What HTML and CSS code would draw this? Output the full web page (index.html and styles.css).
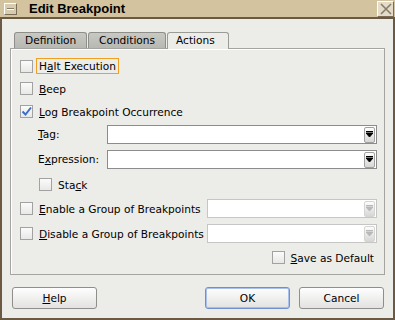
FILE: index.html
```html
<!DOCTYPE html>
<html lang="en">
<head>
  <meta charset="UTF-8">
  <title>Edit Breakpoint</title>
  <link rel="stylesheet" href="styles.css">
</head>
<body>

  <div class="window">
    <div class="titlebar">
      <span class="title-btn menu-btn"><span class="dash"></span></span>
      <span class="title">Edit Breakpoint</span>
      <span class="title-btn close-btn">
        <svg width="14" height="14" viewBox="0 0 14 14">
          <path d="M2 2 L12 12 M12 2 L2 12" stroke="#8a7d66" stroke-width="1.6" fill="none"/>
        </svg>
      </span>
    </div>

    <div class="content">
      <div class="tabs">
        <div class="tab">Definition</div>
        <div class="tab">Conditions</div>
        <div class="tab selected">Actions</div>
      </div>

      <div class="panel">
        <div class="row first">
          <span class="check"></span>
          <span class="label focused">H<u>a</u>lt Execution</span>
        </div>
        <div class="row">
          <span class="check"></span>
          <span class="label"><u>B</u>eep</span>
        </div>
        <div class="row">
          <span class="check checked">
            <svg width="11" height="11" viewBox="0 0 11 11">
              <path d="M1.5 5.5 L4.5 8.5 L10 1.5" stroke="#3b6fc9" stroke-width="2" fill="none"/>
            </svg>
          </span>
          <span class="label"><u>L</u>og Breakpoint Occurrence</span>
        </div>

        <div class="field-row tag-row">
          <span class="field-label"><u>T</u>ag:</span>
          <div class="combo">
            <span class="combo-arrow"><svg width="7" height="7" viewBox="0 0 7 7"><path d="M0 0.5 H7 M0 2 H7 L3.5 6 Z" stroke="#000" stroke-width="1" fill="#000"/></svg></span>
          </div>
        </div>
        <div class="field-row expr-row">
          <span class="field-label">E<u>x</u>pression:</span>
          <div class="combo">
            <span class="combo-arrow"><svg width="7" height="7" viewBox="0 0 7 7"><path d="M0 0.5 H7 M0 2 H7 L3.5 6 Z" stroke="#000" stroke-width="1" fill="#000"/></svg></span>
          </div>
        </div>
        <div class="row indent">
          <span class="check"></span>
          <span class="label">Sta<u>c</u>k</span>
        </div>

        <div class="group-row">
          <span class="check"></span>
          <span class="label group-label"><u>E</u>nable a Group of Breakpoints</span>
          <div class="combo disabled">
            <span class="combo-arrow"><svg width="7" height="7" viewBox="0 0 7 7"><path d="M0 0.5 H7 M0 2 H7 L3.5 6 Z" stroke="#b8b8b8" stroke-width="1" fill="#b8b8b8"/></svg></span>
          </div>
        </div>
        <div class="group-row">
          <span class="check"></span>
          <span class="label group-label"><u>D</u>isable a Group of Breakpoints</span>
          <div class="combo disabled">
            <span class="combo-arrow"><svg width="7" height="7" viewBox="0 0 7 7"><path d="M0 0.5 H7 M0 2 H7 L3.5 6 Z" stroke="#b8b8b8" stroke-width="1" fill="#b8b8b8"/></svg></span>
          </div>
        </div>

        <div class="row save-row">
          <span class="check"></span>
          <span class="label"><u>S</u>ave as Default</span>
        </div>
      </div>

      <div class="buttons">
        <button type="button" class="btn"><u>H</u>elp</button>
        <span class="spacer"></span>
        <button type="button" class="btn default">OK</button>
        <button type="button" class="btn">Cancel</button>
      </div>
    </div>
  </div>

</body>
</html>
```

FILE: styles.css
```css
* {
  box-sizing: border-box;
}

body {
  margin: 0;
  font-family: "DejaVu Sans", sans-serif;
  font-size: 10.6px;
  color: #000;
  background: #ecece8;
}

.window {
  width: 395px;
  height: 320px;
  border: 2px solid #6b5944;
  border-top: none;
  background: #ecece8;
  display: flex;
  flex-direction: column;
}

.titlebar {
  height: 19px;
  background: #d3c39f;
  border-bottom: 2px solid #6b5944;
  display: flex;
  align-items: center;
  margin: 0 -2px;
  padding: 0 1px 0 4px;
}

.title {
  flex: 1;
  font-family: "Liberation Sans", Arial, sans-serif;
  font-weight: bold;
  font-size: 13px;
  margin-left: 12px;
}

.title-btn {
  width: 13px;
  height: 12px;
  background: #d8ccb0;
  border: 1px solid;
  border-color: #fff #7a6c55 #7a6c55 #fff;
  display: flex;
  align-items: center;
  justify-content: center;
}

.menu-btn .dash {
  width: 7px;
  height: 2px;
  background: #8a7d66;
  border-bottom: 1px solid #fff;
}

.close-btn {
  width: 17px;
  height: 16px;
  background: #e4dccb;
}

.content {
  flex: 1;
  padding: 13px 8px 0 8px;
  display: flex;
  flex-direction: column;
}

.tabs {
  display: flex;
  padding-left: 4px;
  height: 16px;
  align-items: flex-end;
}

.tab {
  height: 16px;
  padding: 0 0 0 10px;
  background: linear-gradient(#c9c9c3, #b8b8b2);
  border: 1px solid #8e8e8a;
  border-bottom: none;
  border-radius: 3px 3px 0 0;
  margin-right: 1px;
  line-height: 15px;
}

.tab:nth-child(1) { width: 73px; }
.tab:nth-child(2) { width: 78px; }

.tab.selected {
  width: 62px;
  height: 17px;
  background: #ecece8;
  border-color: #9a9a96;
  position: relative;
  top: 1px;
  padding-left: 8px;
}

.panel {
  border: 1px solid #a4a4a0;
  box-shadow: inset 1px 1px #fff;
  padding: 6px 7px 5px 9px;
}

.row {
  height: 23px;
  display: flex;
  align-items: center;
}

.row.first {
  height: 22px;
}

.row.indent {
  padding-left: 19px;
}

.check {
  width: 13px;
  height: 13px;
  border: 1px solid #a2a2a2;
  background: linear-gradient(#fbfbfb, #e8e8e6);
  display: flex;
  align-items: center;
  justify-content: center;
  flex: none;
}

.label {
  margin-left: 3px;
  padding: 1px 2px;
  border: 1px solid transparent;
  white-space: nowrap;
}

.label.focused {
  border-color: #f0a020;
}

.field-row {
  display: flex;
  padding-left: 18px;
}

.tag-row {
  height: 23px;
  align-items: flex-start;
  padding-top: 2px;
}

.expr-row {
  height: 27px;
  align-items: flex-start;
  padding-top: 4px;
}

.field-label {
  width: 69px;
  height: 19px;
  line-height: 19px;
  white-space: nowrap;
}

.combo {
  flex: 1;
  height: 19px;
  border: 1px solid #8c8c8c;
  background: #fff;
  display: flex;
  justify-content: flex-end;
  align-items: center;
  padding-right: 1px;
}

.combo-arrow {
  width: 11px;
  height: 16px;
  border: 1px solid #a0a0a0;
  border-radius: 2px;
  background: linear-gradient(#fdfdfd, #d6d6d4);
  display: flex;
  align-items: center;
  justify-content: center;
}

.combo.disabled {
  border-color: #c6c6c4;
}

.combo.disabled .combo-arrow {
  border-color: #d4d4d2;
}

.group-row {
  height: 25px;
  display: flex;
  align-items: center;
}

.group-label {
  width: 171px;
  flex: none;
}

.save-row {
  justify-content: flex-end;
}

.buttons {
  display: flex;
  padding: 12px 1px 0 2px;
}

.spacer {
  flex: 1;
}

.btn {
  width: 85px;
  height: 22px;
  font-family: "DejaVu Sans", sans-serif;
  font-size: 10.6px;
  color: #000;
  border: 1px solid #8e8e8c;
  border-radius: 3px;
  background: linear-gradient(#fefefe, #e2e2e0);
  padding: 0;
  margin-left: 9px;
}

.btn:first-child {
  margin-left: 0;
}

.btn.default {
  border-color: #6f8fd0;
  box-shadow: inset 0 0 0 1px #a8c0ec;
}
```
